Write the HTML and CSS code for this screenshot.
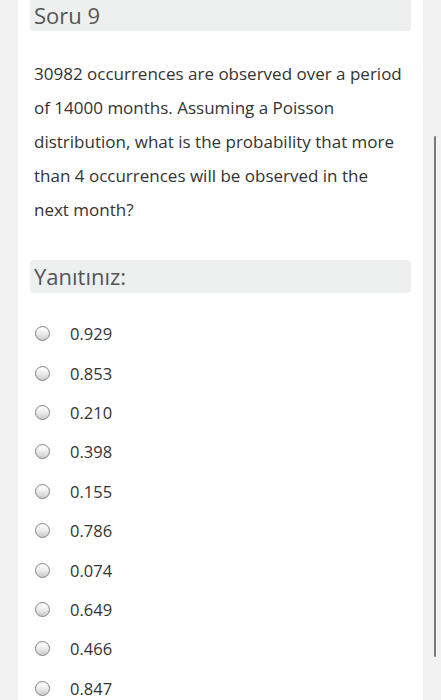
FILE: index.html
```html
<!DOCTYPE html>
<html lang="tr">
<head>
<meta charset="utf-8">
<title>Soru 9</title>
<link rel="stylesheet" href="styles.css">
</head>
<body>
<div class="card">
  <div class="heading">Soru 9</div>
  <div class="question">30982 occurrences are observed over a period of 14000 months. Assuming a Poisson distribution, what is the probability that more than 4 occurrences will be observed in the next month?</div>
  <div class="heading answer-head">Yanıtınız:</div>
  <ul class="options">
    <li class="option"><span class="radio"></span><span>0.929</span></li>
    <li class="option"><span class="radio"></span><span>0.853</span></li>
    <li class="option"><span class="radio"></span><span>0.210</span></li>
    <li class="option"><span class="radio"></span><span>0.398</span></li>
    <li class="option"><span class="radio"></span><span>0.155</span></li>
    <li class="option"><span class="radio"></span><span>0.786</span></li>
    <li class="option"><span class="radio"></span><span>0.074</span></li>
    <li class="option"><span class="radio"></span><span>0.649</span></li>
    <li class="option"><span class="radio"></span><span>0.466</span></li>
    <li class="option"><span class="radio"></span><span>0.847</span></li>
  </ul>
</div>
<div class="scrollbar"></div>
</body>
</html>
```
FILE: styles.css
```css
html, body {
  margin: 0;
  padding: 0;
  background: #f2f2f2;
  font-family: "Open Sans", "Noto Sans", sans-serif;
  color: #333;
  overflow: hidden;
}
.card {
  margin: 0 18px;
  background: #fff;
  padding: 0 12px;
  min-height: 700px;
  box-sizing: border-box;
}
.heading {
  background: #eef0f0;
  height: 31px;
  line-height: 31px;
  padding: 0 4px;
  font-size: 22px;
  color: #555;
  border-radius: 0 0 4px 4px;
  overflow: hidden;
}
.question {
  padding: 0 6px 0 4px;
  margin-top: 26px;
  font-size: 17px;
  line-height: 34px;
  color: #333;
}
.answer-head {
  margin-top: 33px;
  height: 33px;
  line-height: 33px;
  border-radius: 4px;
}
.options {
  list-style: none;
  margin: 21px 0 0;
  padding: 0;
}
.option {
  display: flex;
  align-items: center;
  height: 39.4px;
  font-size: 16.5px;
  color: #333;
}
.radio {
  width: 15px;
  height: 15px;
  box-sizing: border-box;
  border: 1px solid #828282;
  border-radius: 50%;
  background: linear-gradient(180deg, #ffffff 0%, #f2f2f2 40%, #cacaca 100%);
  margin-left: 5px;
  margin-right: 20px;
  flex: none;
}
.scrollbar {
  position: absolute;
  left: 434px;
  top: 136px;
  width: 2px;
  height: 521px;
  background: #7a7a7a;
  border-radius: 1px;
}
```
